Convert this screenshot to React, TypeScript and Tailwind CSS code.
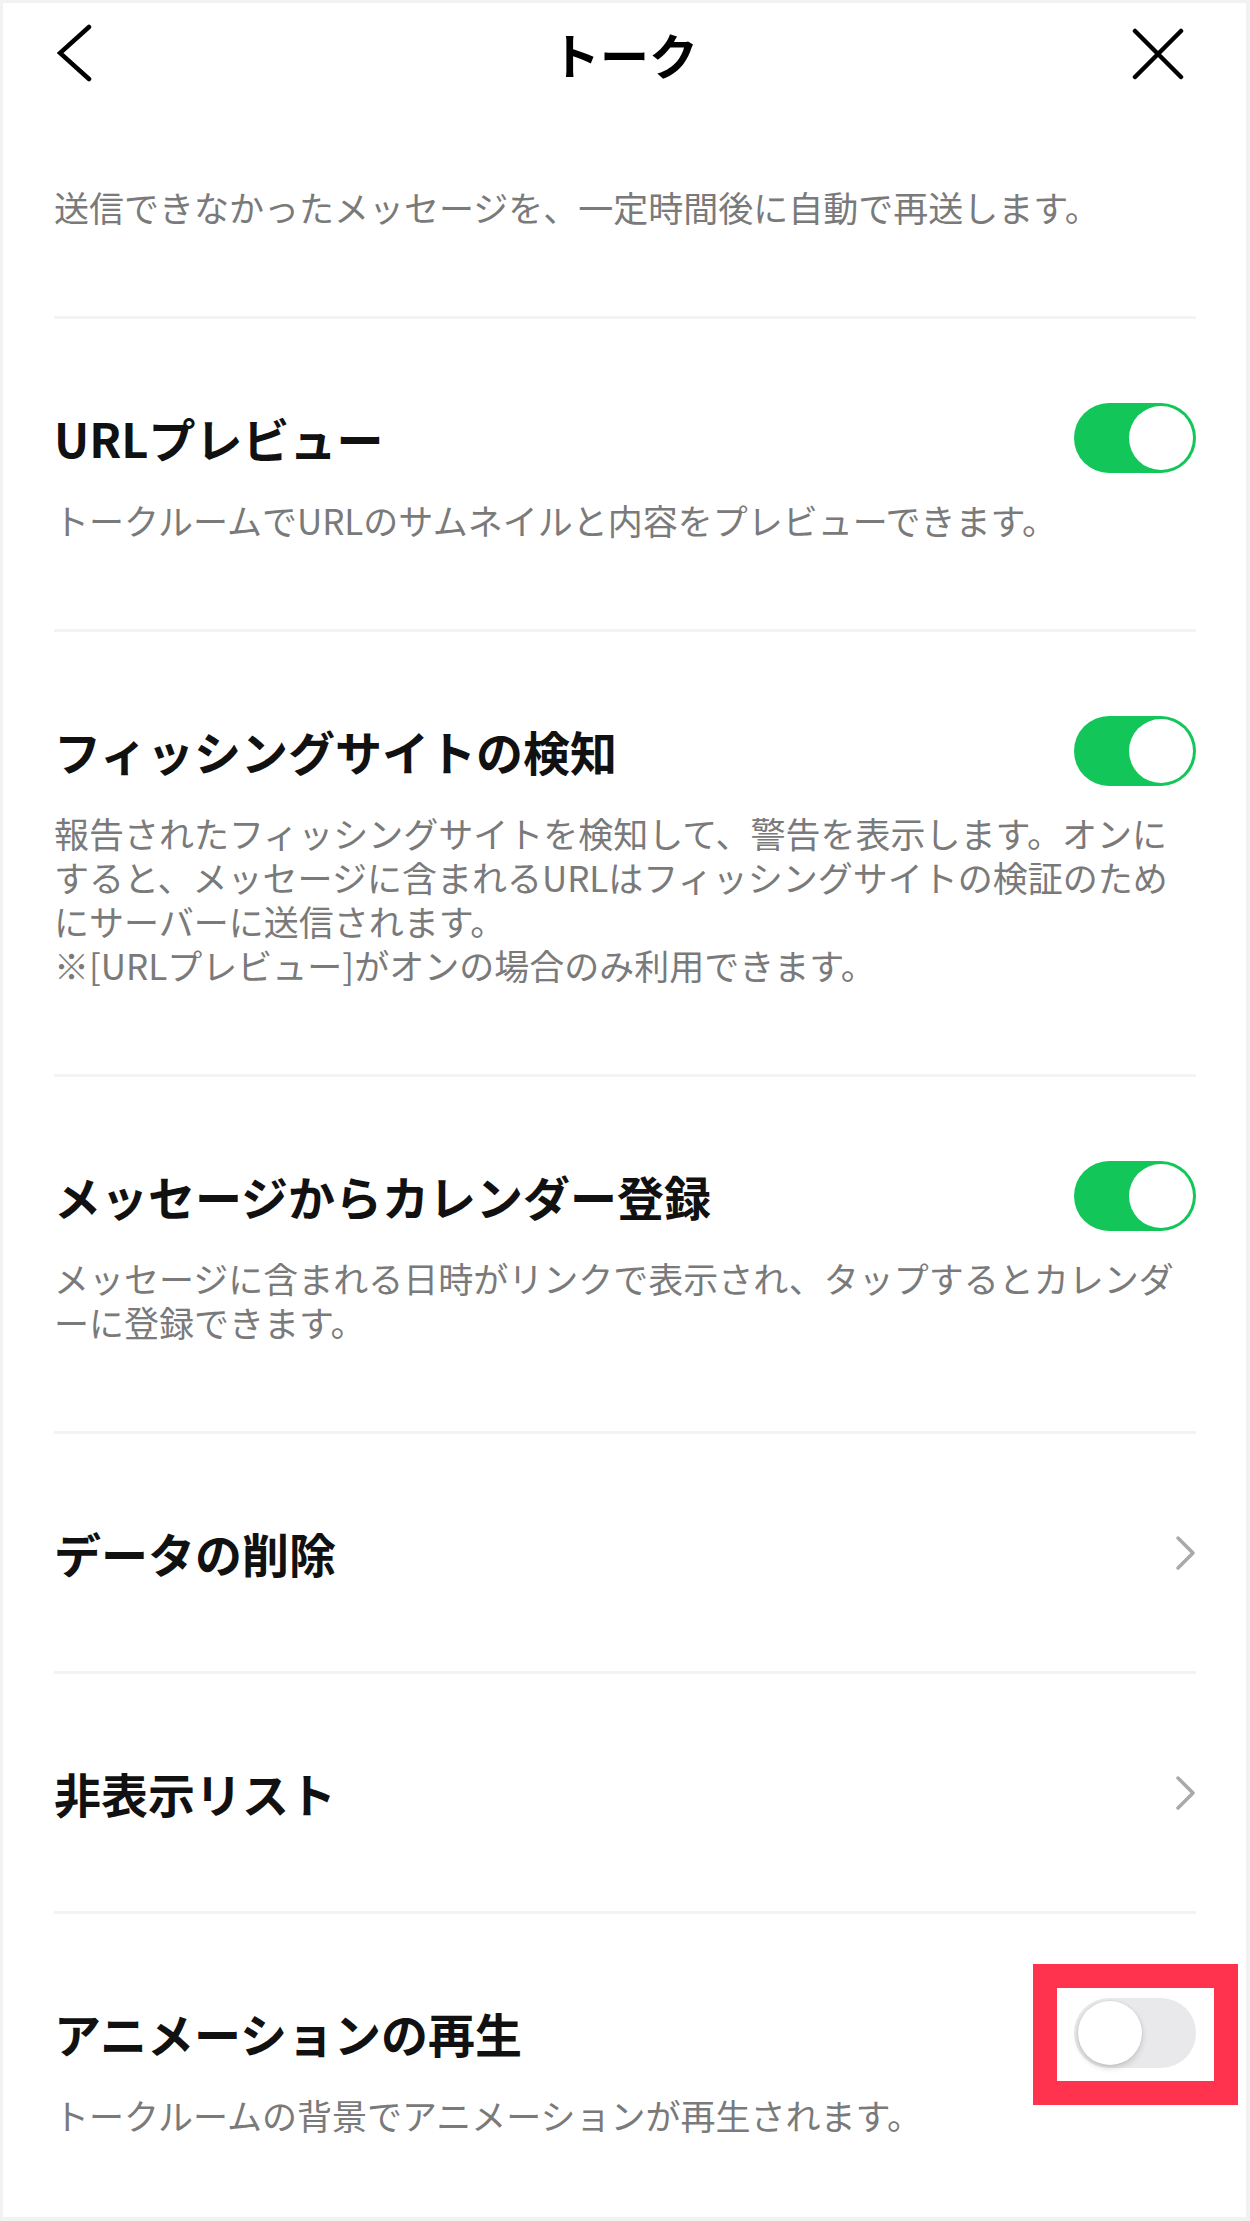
import type React from "react"

const font = "[font-family:'Noto_Sans_CJK_JP','Noto_Sans',sans-serif]"

function Toggle({ on }: { on: boolean }) {
  return (
    <div
      className={
        "relative w-[122px] h-[70px] shrink-0 rounded-full " + (on ? "bg-[#12c659]" : "bg-[#e9e9eb]")
      }
    >
      <div
        className={
          "absolute top-[3px] w-[64px] h-[64px] rounded-full bg-white " +
          (on ? "right-[3px]" : "left-[4px] shadow-[0_3px_6px_rgba(0,0,0,0.16),0_0_0_1px_rgba(0,0,0,0.04)]")
        }
      />
    </div>
  )
}

function Chevron() {
  return (
    <svg width="22" height="36" viewBox="0 0 22 36" className="shrink-0 -mr-[1px]">
      <path d="M3 3 L18 18 L3 33" fill="none" stroke="#a9a9a9" strokeWidth="3.5" strokeLinecap="round" strokeLinejoin="round" />
    </svg>
  )
}

function Desc({ children }: { children: React.ReactNode }) {
  return <div className="mt-[32px] text-[35px] leading-[44px] text-[#7a7a7a] whitespace-nowrap">{children}</div>
}

function ToggleRow({
  title,
  on,
  children,
  highlight,
  last,
}: {
  title: string
  on: boolean
  children: React.ReactNode
  highlight?: boolean
  last?: boolean
}) {
  return (
    <div className={"pt-[91px] " + (last ? "flex-1" : "pb-[87px] border-b-[3px] border-[#f3f3f3]")}>
      <div className="h-[56px] flex items-center justify-between">
        <h2 className="text-[47px] leading-[56px] font-bold text-[#111111]">{title}</h2>
        <div className="relative">
          <Toggle on={on} />
          {highlight && (
            <div className="absolute -left-[41px] -right-[42px] -top-[34px] -bottom-[37px] border-[24px] border-[#ff334e]" />
          )}
        </div>
      </div>
      <Desc>{children}</Desc>
    </div>
  )
}

function LinkRow({ title }: { title: string }) {
  return (
    <div className="h-[240px] flex items-center justify-between border-b-[3px] border-[#f3f3f3]">
      <h2 className="text-[47px] leading-[56px] font-bold text-[#111111]">{title}</h2>
      <Chevron />
    </div>
  )
}

export default function App() {
  return (
    <div
      className={
        font +
        " w-[1250px] h-[2221px] bg-white flex flex-col border-t-[3px] border-l-[3px] border-r-[4px] border-b-[4px] border-[#f2f2f2] overflow-hidden"
      }
    >
      <header className="h-[102px] grid grid-cols-[1fr_auto_1fr] items-center">
        <div className="pl-[54px]">
          <svg width="36" height="60" viewBox="0 0 36 60">
            <path d="M32 3 L3 29 L32 55" fill="none" stroke="#000" strokeWidth="4.5" strokeLinecap="round" strokeLinejoin="miter" />
          </svg>
        </div>
        <h1 className="text-[49px] leading-[56px] font-bold text-black">トーク</h1>
        <div className="flex justify-end pr-[62px]">
          <svg width="52" height="52" viewBox="0 0 52 52">
            <path d="M3 3 L49 49 M49 3 L3 49" fill="none" stroke="#000" strokeWidth="4.5" strokeLinecap="round" />
          </svg>
        </div>
      </header>

      <div className="flex-1 flex flex-col pl-[51px] pr-[50px]">
        <div className="pt-[80px] pb-[87px] border-b-[3px] border-[#f3f3f3]">
          <div className="text-[35px] leading-[44px] text-[#7a7a7a] whitespace-nowrap">
            送信できなかったメッセージを、一定時間後に自動で再送します。
          </div>
        </div>

        <ToggleRow title="URLプレビュー" on>
          トークルームでURLのサムネイルと内容をプレビューできます。
        </ToggleRow>

        <ToggleRow title="フィッシングサイトの検知" on>
          報告されたフィッシングサイトを検知して、警告を表示します。オンに
          <br />
          すると、メッセージに含まれるURLはフィッシングサイトの検証のため
          <br />
          にサーバーに送信されます。
          <br />
          ※[URLプレビュー]がオンの場合のみ利用できます。
        </ToggleRow>

        <ToggleRow title="メッセージからカレンダー登録" on>
          メッセージに含まれる日時がリンクで表示され、タップするとカレンダ
          <br />
          ーに登録できます。
        </ToggleRow>

        <LinkRow title="データの削除" />
        <LinkRow title="非表示リスト" />

        <ToggleRow title="アニメーションの再生" on={false} highlight last>
          トークルームの背景でアニメーションが再生されます。
        </ToggleRow>
      </div>
    </div>
  )
}
